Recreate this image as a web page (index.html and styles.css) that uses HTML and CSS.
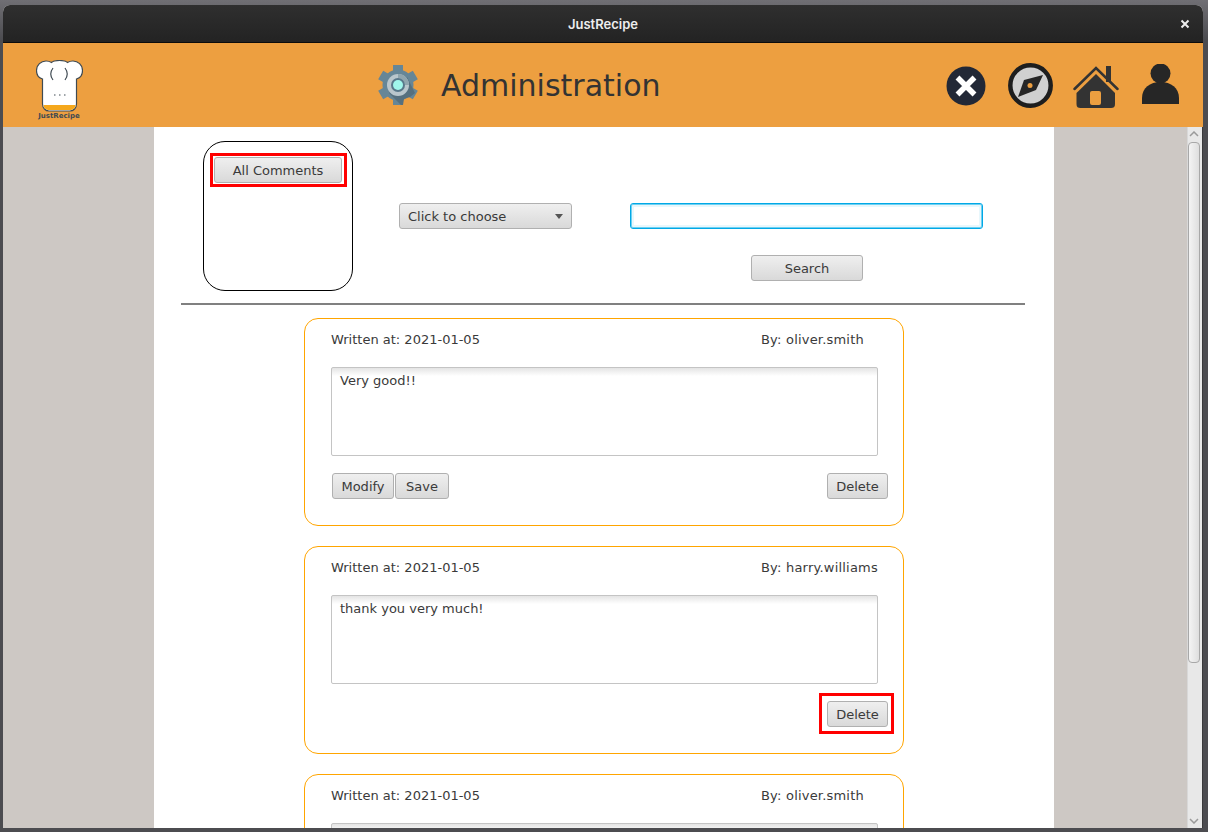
FILE: index.html
```html
<!DOCTYPE html>
<html>
<head>
	<meta charset="utf-8">
	<title>JustRecipe</title>
	<link rel="stylesheet" href="styles.css">
</head>
<body>
<div class="window">
	<div class="titlebar">
		<span class="title">JustRecipe</span>
		<svg class="close" width="10" height="10" viewBox="0 0 10 10"><path d="M1.5 1.5l7 7M8.5 1.5l-7 7" stroke="#eee" stroke-width="2"/></svg>
	</div>

	<div class="header">
		<div class="logo">
			<svg width="47" height="52" viewBox="0 0 47 52">
				<path d="M6.500 19C3 18 .5 15 .5 10.500 .5 5 5 1 10 1c2 0 4 .5 5.500 1.500C17 1 20 .5 23.500 .5s6.500 .5 8 2C33 1.500 35 1 37 1c5 0 9.500 4 9.500 9.500 0 4.500-2.500 7.500-6 8.500V44c0 4-3 7-6.500 7H13c-3.500 0-6.500-3-6.500-7z" fill="#fff" stroke="#3f4a52" stroke-width="1.200"/>
				<path d="M7.500 45h32c0 3-2.500 5-6 5H13.500c-3.500 0-6-2-6-5z" fill="#f5a81c"/>
				<path d="M17 8c-3 4-3 8 0 12M29 8c3 4 3 8 0 12" fill="none" stroke="#3f4a52" stroke-width="1.200"/>
				<path d="M18 35h1.500M23 35h1.500M28 35h1.500" stroke="#3f4a52"/>
			</svg>
			<span class="logo-text">JustRecipe</span>
		</div>

		<div class="heading">
			<svg width="42" height="42" viewBox="0 0 42 42">
				<circle cx="21" cy="21" r="15.500" fill="#668697"/>
				<rect x="16" y="1" width="10" height="40" fill="#668697"/>
				<rect x="16" y="1" width="10" height="40" fill="#668697" transform="rotate(60 21 21)"/>
				<rect x="16" y="1" width="10" height="40" fill="#668697" transform="rotate(120 21 21)"/>
				<path d="M12 29l12 12h2l1-6 6-2 5-4-8-16z" fill="#56707f"/>
				<circle cx="21" cy="21" r="11" fill="#b9c6cc"/>
				<path d="M21 10a11 11 0 0 1 11 11h-4a7 7 0 0 0-7-7z" fill="#8fa5ae"/>
				<circle cx="21" cy="21" r="7" fill="#58788a"/>
				<circle cx="21" cy="21" r="5" fill="#a0f7ec"/>
			</svg>
			<h1>Administration</h1>
		</div>

		<div class="nav-icons">
			<svg class="nav-x" width="40" height="40" viewBox="0 0 40 40">
				<circle cx="20" cy="20" r="19.500" fill="#222836"/>
				<path d="M11.500 11.500l17 17M28.500 11.500l-17 17" stroke="#fff" stroke-width="5.500"/>
			</svg>
			<svg class="nav-compass" width="45" height="45" viewBox="0 0 45 45">
				<circle cx="22.500" cy="22.500" r="20.200" fill="#d0d0d0" stroke="#1e1e1e" stroke-width="4.500"/>
				<path d="M35 12L28 27 10 34l6-17z" fill="#262626"/>
				<circle cx="22" cy="22.500" r="2.500" fill="#ed9f40"/>
			</svg>
			<svg class="nav-home" width="46" height="42" viewBox="0 0 46 42">
				<path d="M33 0h5v16h-5z" fill="#333"/>
				<path d="M1.500 23L23 2l21.500 21" fill="none" stroke="#333" stroke-width="2.500" stroke-linecap="round"/>
				<path d="M3.500 27L23 8l19 19v11c0 3-1.500 4-4 4H7.500c-2.500 0-4-1-4-4z" fill="#333"/>
				<rect x="17" y="25" width="11" height="14" rx="2" fill="#ed9f40"/>
			</svg>
			<svg class="nav-user" width="37" height="40" viewBox="0 0 37 40">
				<circle cx="18.500" cy="9.500" r="10" fill="#262626"/>
				<path d="M0 40v-6c0-10 8-16 18.500-16S37 24 37 34v6z" fill="#262626"/>
			</svg>
		</div>
	</div>

	<div class="body">
		<div class="stage">
			<div class="page">
				<div class="filters">
					<div class="category-box">
						<button class="btn btn-all">All Comments</button>
						<span class="marker marker-all"></span>
					</div>
					<div class="combo">
						<span>Click to choose</span>
						<span class="combo-arrow"></span>
					</div>
					<div class="search-col">
						<input class="search-input" type="text">
						<button class="btn btn-search">Search</button>
					</div>
				</div>
				<div class="divider"></div>

				<div class="card">
					<div class="card-head">
						<span>Written at: 2021-01-05</span>
						<span class="author">By: oliver.smith</span>
					</div>
					<div class="comment">Very good!!</div>
					<div class="card-actions">
						<button class="btn btn-modify">Modify</button>
						<button class="btn btn-save">Save</button>
						<button class="btn btn-delete">Delete</button>
					</div>
				</div>

				<div class="card">
					<div class="card-head">
						<span>Written at: 2021-01-05</span>
						<span class="author">By: harry.williams</span>
					</div>
					<div class="comment">thank you very much!</div>
					<div class="card-actions">
						<button class="btn btn-delete">Delete<span class="marker marker-delete"></span></button>
					</div>
				</div>

				<div class="card">
					<div class="card-head">
						<span>Written at: 2021-01-05</span>
						<span class="author">By: oliver.smith</span>
					</div>
					<div class="comment"></div>
				</div>
			</div>
		</div>
		<div class="scrollbar">
			<svg width="10" height="6" viewBox="0 0 10 6"><path d="M1 5l4-4 4 4" fill="none" stroke="#9a9a9a" stroke-width="1.500"/></svg>
			<div class="thumb"></div>
			<svg class="arrow-down" width="10" height="6" viewBox="0 0 10 6"><path d="M1 1l4 4 4-4" fill="none" stroke="#9a9a9a" stroke-width="1.500"/></svg>
		</div>
	</div>
</div>
</body>
</html>
```

FILE: styles.css
```css
html, body { margin: 0; height: 100%; }
body { width: 1208px; height: 832px; overflow: hidden; background: linear-gradient(#706f74, #4c4c50 40px); font: 13px "DejaVu Sans", sans-serif; color: #3a3a3a; }

.window { display: flex; flex-direction: column; box-sizing: border-box; width: 1200px; height: 823px; margin: 5px 0 0 3px; border-radius: 7px 7px 0 0; background: #ffffff; overflow: hidden; }

.titlebar { position: relative; display: flex; flex: none; align-items: center; justify-content: center; box-sizing: border-box; height: 38px; padding-top: 1px; background: linear-gradient(#2f2f2f, #232323); border-bottom: 1px solid #0c0c0c; }
.title { font-size: 13px; font-weight: 600; font-family: Inter, sans-serif; color: #eeeeee; }
.close { position: absolute; top: 14px; right: 13px; }

.header { display: flex; flex: none; align-items: center; height: 84px; background: #ed9f40; }
.logo { display: flex; flex-direction: column; align-items: center; align-self: flex-start; width: 50px; margin: 17px 0 0 31px; }
.logo svg { display: block; }
.logo-text { font-size: 7px; font-weight: bold; line-height: 9px; color: #3f4a52; }
.heading { display: flex; align-items: center; margin-left: 293px; }
.heading h1 { margin: 0 0 0 22px; font-size: 30px; font-weight: normal; color: #333333; }
.nav-icons { display: flex; align-items: center; margin-left: 285px; }
.nav-x { margin-top: 1px; }
.nav-compass { margin-left: 22px; margin-top: 1px; }
.nav-home { margin-left: 20px; margin-top: 4px; }
.nav-user { margin-left: 23px; margin-top: -2px; }

.body { display: flex; flex: 1; min-height: 0; background: #3a3a3c; }
.stage { flex: 1; min-width: 0; overflow: hidden; background: #cdc8c4; }
.page { width: 900px; margin-left: 151px; background: #ffffff; min-height: 100%; }

.filters { display: flex; align-items: flex-start; box-sizing: border-box; height: 176px; padding: 14px 0 0 49px; }
.category-box { position: relative; box-sizing: border-box; width: 150px; height: 150px; padding: 15px 0 0 10px; border: 1px solid #000000; border-radius: 22px; }

.btn { position: relative; box-sizing: border-box; height: 26px; padding: 0; border: 1px solid #b0b0b0; border-radius: 3px; background: linear-gradient(#efefef, #d9d9d9); font: 13px "DejaVu Sans", sans-serif; color: #3a3a3a; }
.btn-all { width: 128px; }
.btn-search { width: 112px; margin: 26px 0 0 121px; }
.btn-modify { width: 62px; margin-left: 1px; }
.btn-save { width: 54px; margin-left: 1px; }
.btn-delete { width: 61px; margin-left: auto; margin-right: -10px; }

.marker { position: absolute; border: 3px solid #ff0000; }
.marker-all { top: 11px; left: 6px; width: 131px; height: 28px; }
.marker-delete { top: -9px; left: -9px; width: 69px; height: 35px; }

.combo { display: flex; align-items: center; justify-content: space-between; box-sizing: border-box; width: 173px; height: 26px; margin: 62px 0 0 46px; padding: 0 8px; border: 1px solid #b0b0b0; border-radius: 3px; background: linear-gradient(#efefef, #d9d9d9); }
.combo-arrow { width: 0; height: 0; border: 4.500px solid transparent; border-top: 5px solid #555555; border-bottom: 0; }

.search-col { display: flex; flex-direction: column; align-items: flex-start; width: 353px; margin: 62px 0 0 58px; }
.search-input { box-sizing: border-box; width: 353px; height: 26px; margin: 0; padding: 0 7px; border: 1px solid #00a8e6; border-radius: 3px; outline: 0; box-shadow: inset 0 0 0 1px #6fd0f2, inset 0 0 0 3px #e8f7fc; background: #ffffff; }

.divider { height: 2px; margin: 0 29px 0 27px; background: #808080; }

.card { box-sizing: border-box; display: flex; flex-direction: column; width: 600px; height: 208px; margin: 13px 0 20px 150px; padding: 13px 25px 0 26px; border: 1px solid #ffa500; border-radius: 14px; }
.card + .card { margin-top: 0; }
.card-head { display: flex; justify-content: space-between; height: 16px; line-height: 16px; }
.author { width: 117px; letter-spacing: .2px; white-space: nowrap; }
.comment { box-sizing: border-box; height: 89px; margin-top: 19px; padding: 5px 8px; border: 1px solid #c4c4c4; border-radius: 2px; background: linear-gradient(#e4e4e4, #ffffff 8px); line-height: 16px; }
.card-actions { display: flex; align-items: center; margin-top: 17px; }

.scrollbar { display: flex; flex: none; flex-direction: column; align-items: center; box-sizing: border-box; width: 15px; margin-right: 1px; padding: 4px 2px 0 0; background: #e8e8e8; border-left: 1px solid #d8d8d8; }
.thumb { box-sizing: border-box; flex: none; width: 12px; height: 521px; margin-top: 5px; border: 1px solid #a8a8a8; border-radius: 4px; background: linear-gradient(90deg, #f4f4f4, #dedede); }
.arrow-down { margin-top: auto; margin-bottom: 4px; }
```
